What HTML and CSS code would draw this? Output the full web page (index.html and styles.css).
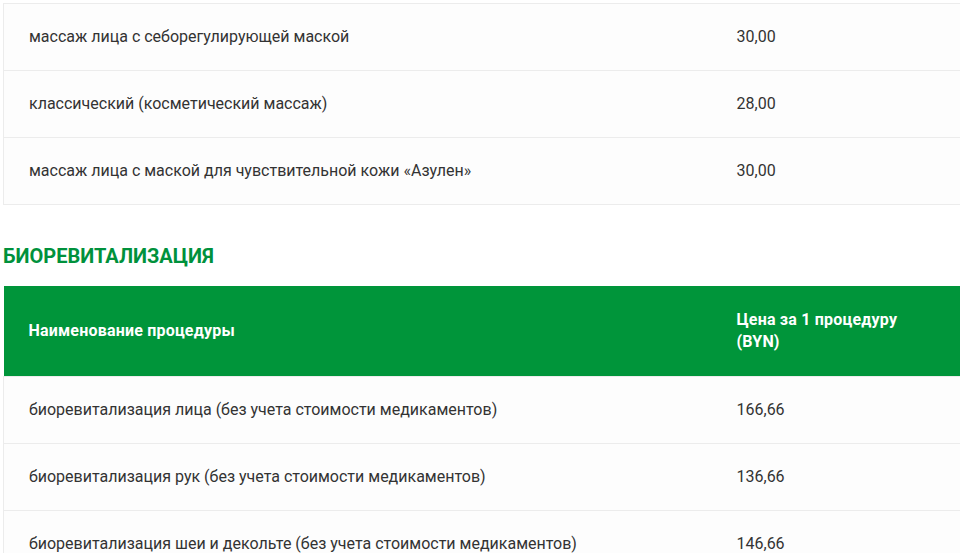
FILE: index.html
```html
<!DOCTYPE html>
<html lang="ru">
<head>
<meta charset="utf-8">
<link rel="stylesheet" href="styles.css">
</head>
<body>
<div class="page">
  <table class="price">
    <colgroup><col class="c-name"><col class="c-price"></colgroup>
    <tbody>
      <tr><td>массаж лица с себорегулирующей маской</td><td>30,00</td></tr>
      <tr><td>классический (косметический массаж)</td><td>28,00</td></tr>
      <tr><td>массаж лица с маской для чувствительной кожи «Азулен»</td><td>30,00</td></tr>
    </tbody>
  </table>

  <h2 class="section-title">БИОРЕВИТАЛИЗАЦИЯ</h2>

  <table class="price">
    <colgroup><col class="c-name"><col class="c-price"></colgroup>
    <thead>
      <tr><th>Наименование процедуры</th><th>Цена за 1 процедуру<br>(BYN)</th></tr>
    </thead>
    <tbody>
      <tr><td>биоревитализация лица (без учета стоимости медикаментов)</td><td>166,66</td></tr>
      <tr><td>биоревитализация рук (без учета стоимости медикаментов)</td><td>136,66</td></tr>
      <tr><td>биоревитализация шеи и декольте (без учета стоимости медикаментов)</td><td>146,66</td></tr>
    </tbody>
  </table>
</div>
</body>
</html>
```

FILE: styles.css
```css
html, body {
  margin: 0;
  padding: 0;
  background: #fff;
  overflow: hidden;
}
.page {
  padding: 3px 0 0 3px;
  font-family: Roboto, "Liberation Sans", sans-serif;
  color: #333;
}
.price {
  border-collapse: collapse;
  width: 957px;
  table-layout: fixed;
  font-size: 16px;
}
.c-name { width: 708px; }
.c-price { width: 249px; }
.price td {
  height: 66px;
  padding: 0 25px;
  border-top: 1px solid #ececec;
  border-bottom: 1px solid #ececec;
  background: #fdfdfd;
  line-height: 20px;
  vertical-align: middle;
}
.price td:first-child { border-left: 1px solid #ececec; }
.price th {
  background: #00953a;
  color: #fff;
  font-weight: 700;
  text-align: left;
  padding: 23px 25px;
  line-height: 22px;
  height: 44px;
  letter-spacing: 0.2px;
  vertical-align: middle;
}
.section-title {
  margin: 0;
  padding: 39px 0 18px 0;
  font-size: 20px;
  font-weight: 700;
  line-height: 24px;
  color: #00913c;
}
```
